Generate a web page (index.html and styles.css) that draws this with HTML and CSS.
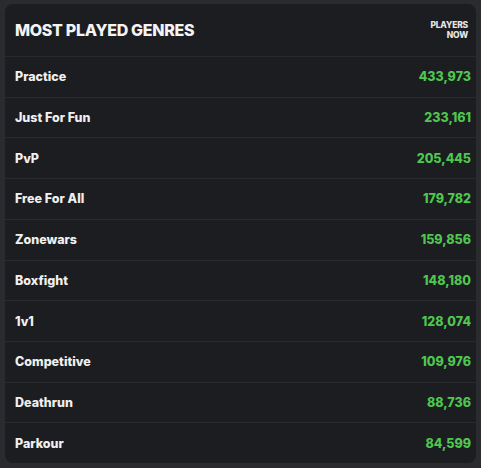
FILE: index.html
```html
<!DOCTYPE html>
<html>
<head>
<meta charset="utf-8">
<link rel="stylesheet" href="styles.css">
</head>
<body>
<div class="card">
  <div class="head">
    <h1 class="title">MOST PLAYED GENRES</h1>
    <div class="sub">PLAYERS<br>NOW</div>
  </div>
  <div class="row"><span class="name">Practice</span><span class="num">433,973</span></div>
  <div class="row"><span class="name">Just For Fun</span><span class="num">233,161</span></div>
  <div class="row"><span class="name">PvP</span><span class="num">205,445</span></div>
  <div class="row"><span class="name">Free For All</span><span class="num">179,782</span></div>
  <div class="row"><span class="name">Zonewars</span><span class="num">159,856</span></div>
  <div class="row"><span class="name">Boxfight</span><span class="num">148,180</span></div>
  <div class="row"><span class="name">1v1</span><span class="num">128,074</span></div>
  <div class="row"><span class="name">Competitive</span><span class="num">109,976</span></div>
  <div class="row"><span class="name">Deathrun</span><span class="num">88,736</span></div>
  <div class="row"><span class="name">Parkour</span><span class="num">84,599</span></div>
</div>
</body>
</html>
```
FILE: styles.css
```css
html, body { margin: 0; padding: 0; }
body {
  background: #2a2b2f;
  width: 481px;
  height: 468px;
  padding: 4px 5px 0 5px;
  box-sizing: border-box;
  font-family: Inter, "Noto Sans", sans-serif;
  color: #f2f2f2;
}
.card {
  background: #1c1d21;
  border-radius: 8px;
  height: 459px;
  display: flex;
  flex-direction: column;
  overflow: hidden;
}
.head {
  height: 52px;
  display: flex;
  align-items: center;
  justify-content: space-between;
  padding: 0 8px 0 10px;
  box-sizing: border-box;
}
.title {
  margin: 0;
  font-size: 16px;
  font-weight: 800;
  letter-spacing: -0.3px;
  color: #f4f4f4;
}
.sub {
  font-size: 8.5px;
  font-weight: 800;
  text-align: right;
  line-height: 10.5px;
  color: #e6e6e6;
  letter-spacing: -0.2px;
}
.row {
  flex: 1;
  display: flex;
  align-items: center;
  justify-content: space-between;
  border-top: 1px solid #28292d;
  padding: 0 5px 0 10px;
}
.name {
  font-size: 12.5px;
  font-weight: 800;
  color: #f0f0f0;
}
.num {
  font-size: 12.5px;
  font-weight: 800;
  color: #4fc74f;
}
```
